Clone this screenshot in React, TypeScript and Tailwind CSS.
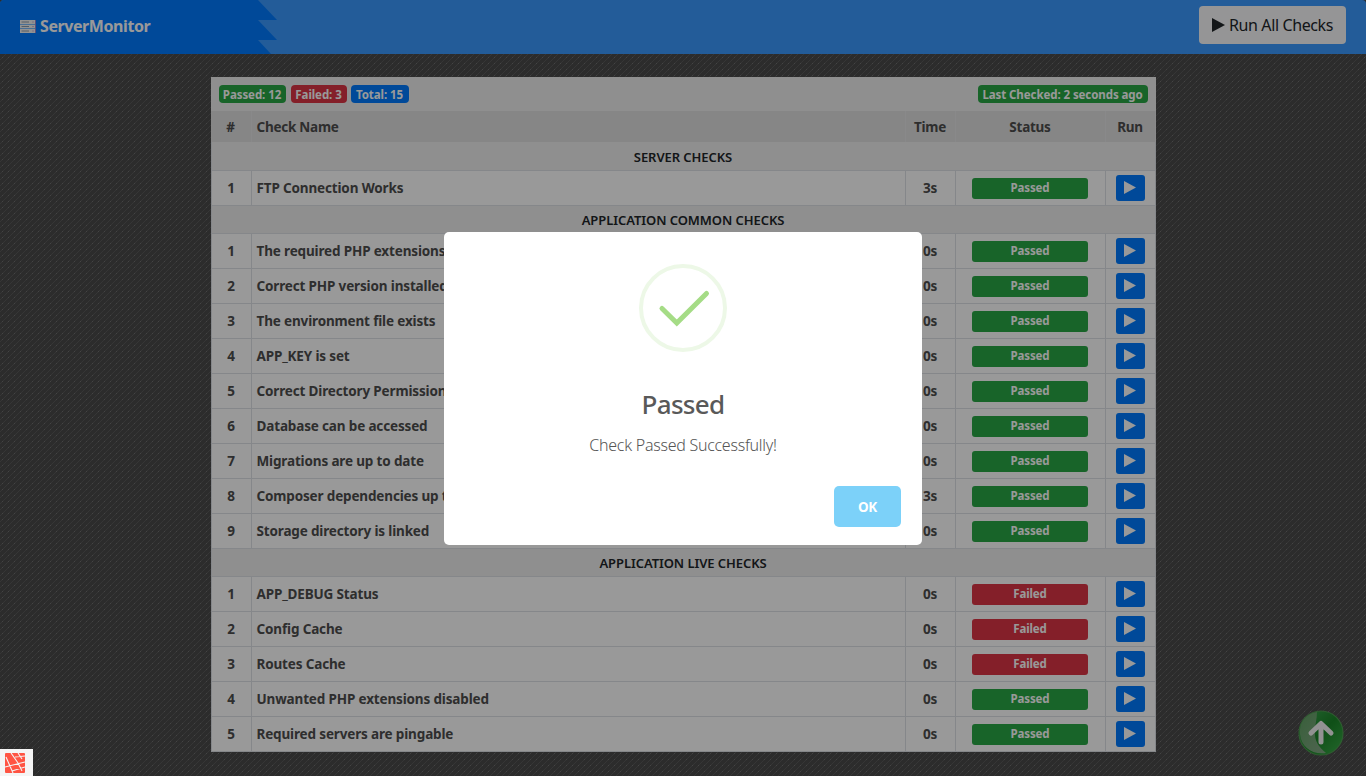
import React from "react";

type Check = { name: string; time: string; ok: boolean };
type Group = { title: string; checks: Check[] };

const c = (name: string, time = "0s", ok = true): Check => ({ name, time, ok });

const groups: Group[] = [
  { title: "SERVER CHECKS", checks: [c("FTP Connection Works", "3s")] },
  {
    title: "APPLICATION COMMON CHECKS",
    checks: [
      c("The required PHP extensions are installed"),
      c("Correct PHP version installed"),
      c("The environment file exists"),
      c("APP_KEY is set"),
      c("Correct Directory Permissions"),
      c("Database can be accessed"),
      c("Migrations are up to date"),
      c("Composer dependencies up to date", "3s"),
      c("Storage directory is linked"),
    ],
  },
  {
    title: "APPLICATION LIVE CHECKS",
    checks: [
      c("APP_DEBUG Status", "0s", false),
      c("Config Cache", "0s", false),
      c("Routes Cache", "0s", false),
      c("Unwanted PHP extensions disabled"),
      c("Required servers are pingable"),
    ],
  },
];

const cols = "grid grid-cols-[40px_654px_50px_150px_51px]";

function Play({ className }: { className: string }) {
  return (
    <svg viewBox="0 0 12 13" preserveAspectRatio="none" className={className} fill="currentColor">
      <path d="M0 0L12 6.5L0 13Z" />
    </svg>
  );
}

function Row({ index, check }: { index: number; check: Check }) {
  return (
    <div className={`${cols} h-[35px] border-t border-[#dee2e6] bg-white text-[13.5px] font-bold tracking-[-0.15px] text-[#4d4d4d]`}>
      <div className="flex items-center justify-center border-l border-[#dee2e6]">{index}</div>
      <div className="flex items-center overflow-hidden border-l border-[#dee2e6] pl-[5px] whitespace-nowrap">
        {check.name}
      </div>
      <div className="flex items-center justify-center border-l border-[#dee2e6]">{check.time}</div>
      <div className="flex items-center justify-center border-l border-[#dee2e6]">
        <span
          className={`flex h-[21px] w-[116px] items-center justify-center rounded-[3px] pb-px text-[11.5px] tracking-[-0.15px] text-white ${
            check.ok ? "bg-[#28a745]" : "bg-[#dc3545]"
          }`}
        >
          {check.ok ? "Passed" : "Failed"}
        </span>
      </div>
      <div className="flex items-center justify-center border-x border-[#dee2e6]">
        <button className="flex h-[26px] w-[29px] items-center justify-center rounded-[3px] bg-[#007bff] pb-px text-white">
          <Play className="h-[13px] w-[12px]" />
        </button>
      </div>
    </div>
  );
}

export default function App() {
  return (
    <div className="relative h-[776px] w-[1366px] overflow-hidden bg-[#4a4a4a] font-['Noto_Sans','Open_Sans',sans-serif]">
      <svg className="absolute inset-0 h-full w-full">
        <defs>
          <pattern id="weave" width="6" height="6" patternUnits="userSpaceOnUse">
            <path d="M-1 7L7 -1M-1 1L1 -1M5 7L7 5" stroke="#5a5a5a" strokeWidth="1" />
            <rect x="2" y="3" width="1" height="1" fill="#727272" />
          </pattern>
        </defs>
        <rect width="1366" height="776" fill="url(#weave)" />
      </svg>

      <div className="relative">
        <header className="relative flex h-[54px] items-center justify-between overflow-hidden rounded-t-[4px] bg-[#3b99ff] pr-5 pl-5">
          <svg className="absolute top-0 left-0 h-[54px] w-[280px]" viewBox="0 0 280 54">
            <path d="M0 0H258L277 20H258L277 40H258L271 54H0Z" fill="#007bff" />
          </svg>
          <div className="relative flex items-center gap-1 pb-[2px] text-white">
            <svg className="h-[13px] w-[16px]" viewBox="0 0 16 13">
              <path d="M0 0H16V4H0ZM0 4.6H16V8.4H0ZM0 9H16V13H0Z" fill="#f4f4f4" />
              <path d="M1.5 2H9M1.5 6.5H9M1.5 11H9" stroke="#7f8fa3" strokeWidth="0.9" />
              <path d="M12 2H14M12 6.5H14M12 11H14" stroke="#d0b0d8" strokeWidth="0.9" />
              <path d="M15.5 0V13" stroke="#9b80c8" strokeWidth="1" />
            </svg>
            <span className="text-[16px] font-bold tracking-[-0.42px]">ServerMonitor</span>
          </div>
          <button className="relative mb-[4px] flex h-[38px] w-[147px] items-center justify-center gap-1 rounded-[4px] bg-[#f8f9fa] text-[16px] text-[#212529]">
            <Play className="h-[14px] w-[13px]" />
            <span className="tracking-[-0.38px]">Run All Checks</span>
          </button>
        </header>

        <main className="mx-auto mt-[23px] w-[945px]">
          <div className="flex h-[34px] items-center gap-[5px] bg-[#efefef] px-2 text-[11.5px] font-bold tracking-[-0.08px] whitespace-nowrap text-white">
            <span className="flex h-[18px] w-[67px] items-center justify-center rounded-[4px] bg-[#28a745] pt-px">Passed: 12</span>
            <span className="flex h-[18px] w-[56px] items-center justify-center rounded-[4px] bg-[#dc3545] pt-px">Failed: 3</span>
            <span className="-ml-px flex h-[18px] w-[58px] items-center justify-center rounded-[4px] bg-[#007bff] pt-px">Total: 15</span>
            <span className="ml-auto flex h-[18px] w-[170px] items-center justify-center rounded-[4px] bg-[#28a745] pt-px">
              Last Checked: 2 seconds ago
            </span>
          </div>
          <div className={`${cols} h-[31px] bg-[#dfdfdf] text-[13.5px] font-bold tracking-[-0.25px] text-[#4d4d4d]`}>
            <div className="flex items-center justify-center pt-px">#</div>
            <div className="flex items-center border-l border-[#e4e5e7] pt-px pl-[5px]">Check Name</div>
            <div className="flex items-center justify-center border-l border-[#e4e5e7] pt-px">Time</div>
            <div className="flex items-center justify-center border-l border-[#e4e5e7] pt-px">Status</div>
            <div className="flex items-center justify-center border-x border-[#e4e5e7] pt-px">Run</div>
          </div>
          {groups.map((g, gi) => (
            <React.Fragment key={g.title}>
              <div
                className={`flex h-[28px] items-center justify-center border-x border-[#dee2e6] bg-[#efefef] text-[13px] font-semibold tracking-[-0.07px] text-[#212529] ${
                  gi === 0 ? "pt-[3px]" : "border-t pt-[2px]"
                }`}
              >
                {g.title}
              </div>
              {g.checks.map((check, i) => (
                <Row key={check.name} index={i + 1} check={check} />
              ))}
            </React.Fragment>
          ))}
          <div className="h-px bg-[#dee2e6]" />
        </main>
      </div>

      <svg className="absolute top-[710px] left-[1298px] h-[46px] w-[46px]" viewBox="0 0 46 46">
        <defs>
          <linearGradient id="orb" x1="0" y1="0" x2="1" y2="1">
            <stop offset="0" stopColor="#41a855" />
            <stop offset="0.5" stopColor="#1a8427" />
            <stop offset="1" stopColor="#3cae4a" />
          </linearGradient>
          <linearGradient id="shine" x1="0" y1="0" x2="1" y2="1">
            <stop offset="0" stopColor="#5fa062" />
            <stop offset="1" stopColor="#86a888" />
          </linearGradient>
        </defs>
        <circle cx="23" cy="23" r="22" fill="url(#orb)" stroke="#4d9b50" strokeWidth="1.2" />
        <path d="M19 2C7 4 1 13 2 24C3 37 14 45 28 43C21 37 16 31 17 21C17 14 19 9 19 2Z" fill="url(#shine)" />
        <path d="M13 23L23 13.5L33 23M23 15V32" fill="none" stroke="#f4f4f4" strokeWidth="5" strokeLinecap="round" strokeLinejoin="round" />
      </svg>

      <div className="absolute inset-0 bg-black/40" />

      <div className="absolute bottom-0 left-0 flex h-[27px] w-[33px] items-center bg-[#f5f5f5] pl-[5px]">
        <svg className="h-[20px] w-[20px]" viewBox="0 0 20 20">
          <rect width="20" height="20" rx="1" fill="#ff5443" />
          <path d="M1 4L8 20M0 14L20 9M6 0L13 10L17 18M13 0L17 6M10 4L20 3M7 18L20 14" fill="none" stroke="#f5f5f5" strokeWidth="1.1" />
        </svg>
      </div>

      <div className="absolute top-[232px] left-[444px] flex h-[313px] w-[478px] flex-col items-center rounded-[5px] bg-white pt-8">
        <svg className="h-[88px] w-[88px]" viewBox="0 0 88 88" fill="none">
          <circle cx="44" cy="44" r="42" stroke="#edf8e7" strokeWidth="4" />
          <path d="M23 44.5L37.8 59L67.5 29.5" stroke="#a5dc86" strokeWidth="5" strokeLinecap="round" />
        </svg>
        <h2 className="mt-[34px] text-[26px] leading-[36px] font-medium tracking-[-0.7px] text-[#595959]">Passed</h2>
        <p className="mt-[12px] text-[16px] leading-[22px] font-light tracking-[-0.27px] text-[#555555]">Check Passed Successfully!</p>
        <div className="mt-[30px] flex w-full justify-end pr-[21px]">
          <button className="h-[41px] w-[67px] rounded-[5px] bg-[#7cd1f9] pt-px text-[13.5px] font-bold tracking-[-0.3px] text-white">OK</button>
        </div>
      </div>
    </div>
  );
}
